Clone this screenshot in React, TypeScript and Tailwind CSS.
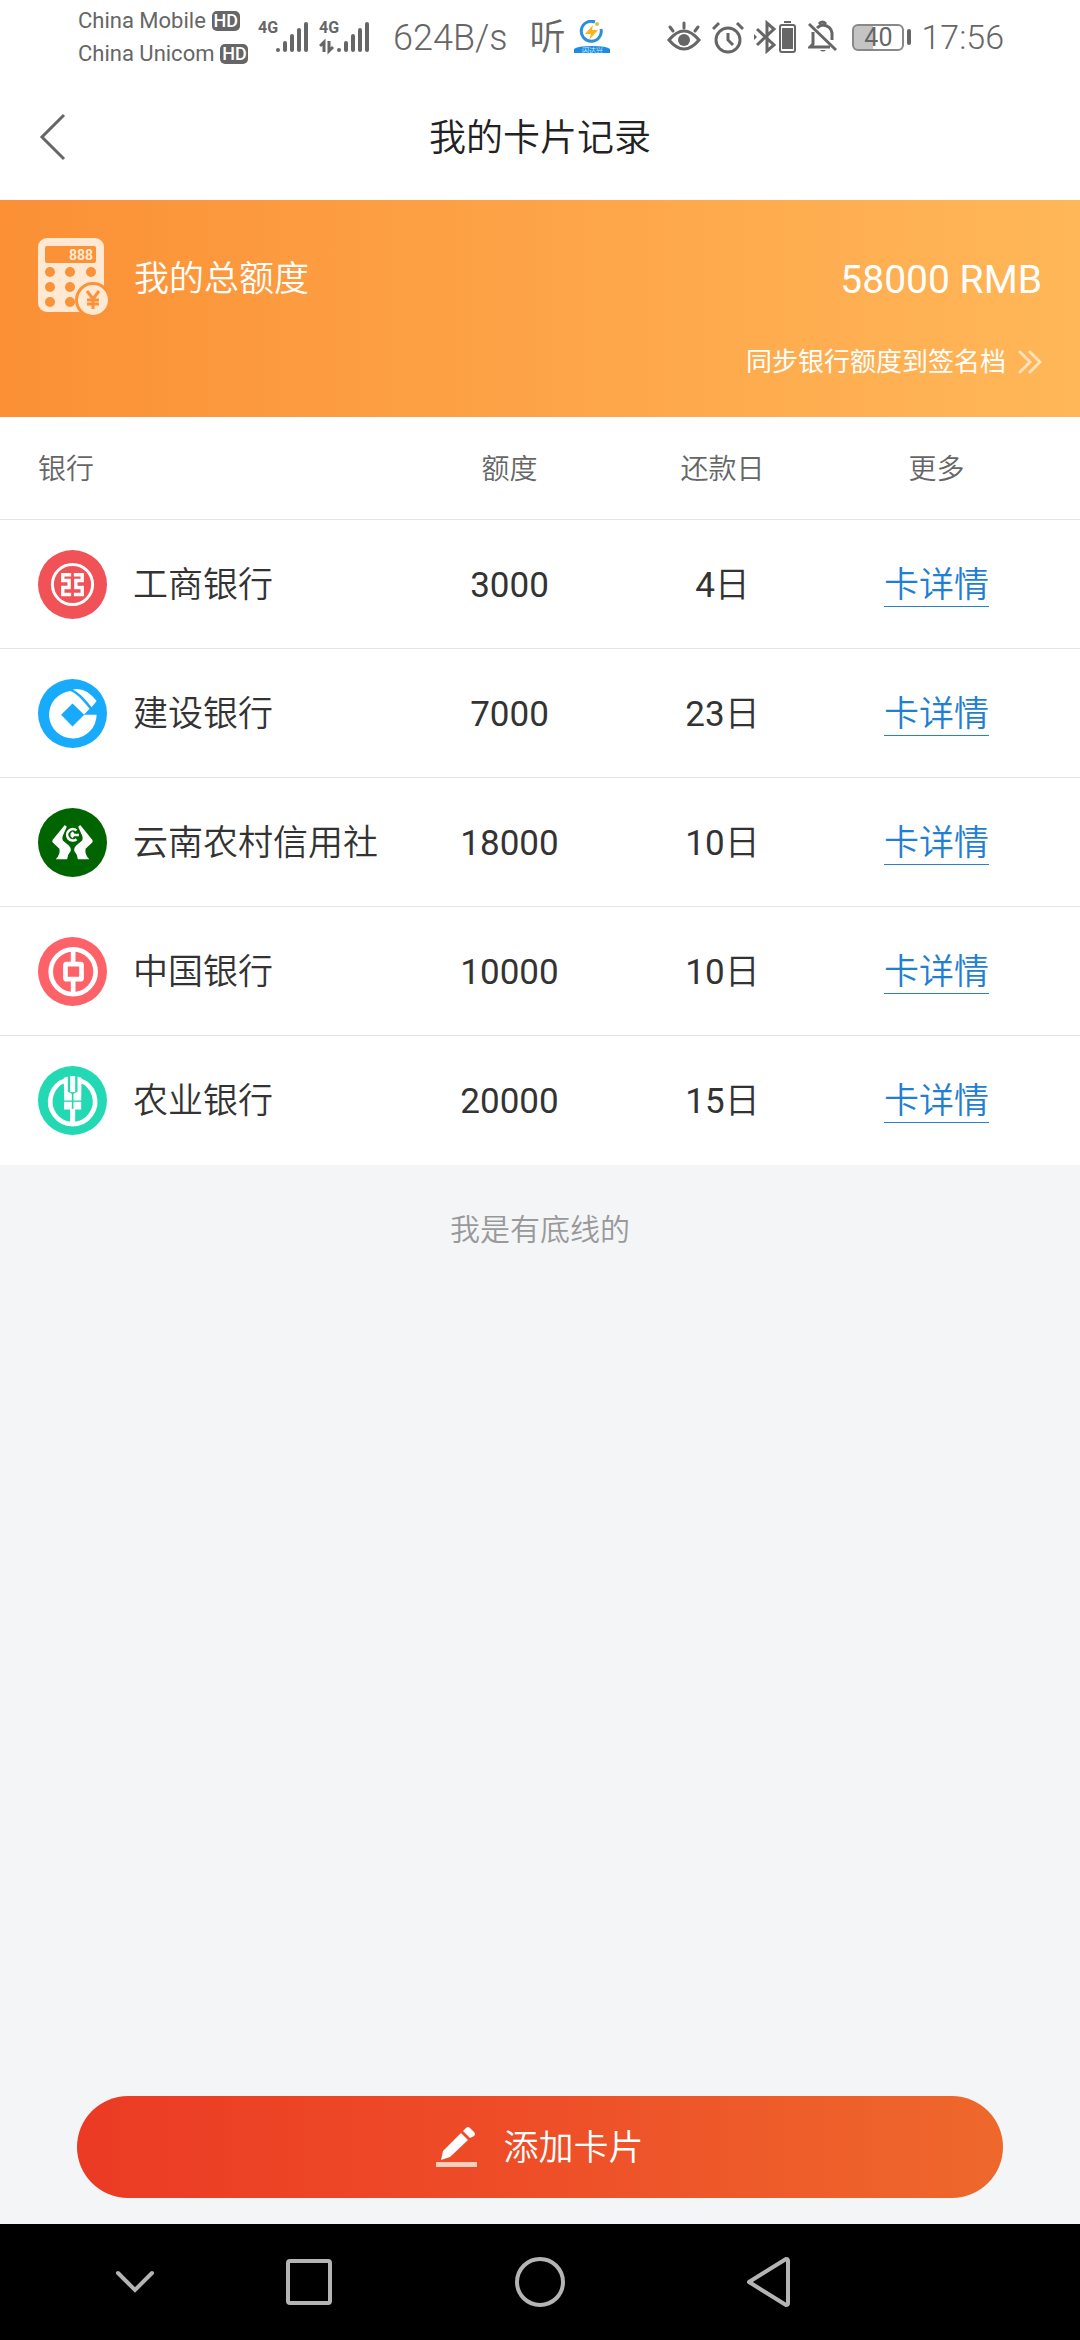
import type { ReactNode } from "react";

const IcbcLogo = () => (
	<svg viewBox="0 0 206 206" className="size-[69px] shrink-0" aria-hidden="true">
		<circle cx="103" cy="103" r="103" fill="#f05258" />
		<g fill="none" stroke="#fff">
			<circle cx="103" cy="103" r="60" strokeWidth="9" />
			<path d="M99 74H74V91H93V112H74V133H99" strokeWidth="10" />
			<path d="M107 74H132V91H113V112H132V133H107" strokeWidth="10" />
		</g>
	</svg>
);

const CcbLogo = () => (
	<svg viewBox="0 0 206 206" className="size-[69px] shrink-0" aria-hidden="true">
		<circle cx="103" cy="103" r="103" fill="#18abfb" />
		<path
			fill="#fff"
			fillRule="evenodd"
			d="M175 107A71 71 0 1 1 97 36Q118 43 154 89L137 107ZM103 73L69 107L103 142L138 107Z"
		/>
		<path fill="#fff" d="M104 31Q143 23 175 66L160 84Q130 44 104 31Z" />
	</svg>
);

const RuralCreditLogo = () => (
	<svg viewBox="0 0 206 206" className="size-[69px] shrink-0" aria-hidden="true">
		<circle cx="103" cy="103" r="103" fill="#006400" />
		<g fill="#fff">
			<path d="M80 51L44 95Q41 99 44 103L64 122Q67 140 53 153H87Q88 140 98 128Q99 118 92 112L74 97Q71 90 74 83L86 56Z" />
			<path d="M126 51L162 95Q165 99 162 103L142 122Q139 140 153 153H119Q118 140 108 128Q107 118 114 112L132 97Q135 90 132 83L120 56Z" />
			<path d="M98 75L103 70L108 75V77H122V84H108L103 90L97 84V77Z" />
		</g>
		<path d="M115 67A17 17 0 1 0 115 93" fill="none" stroke="#fff" strokeWidth="8" />
	</svg>
);

const BocLogo = () => (
	<svg viewBox="0 0 206 206" className="size-[69px] shrink-0" aria-hidden="true">
		<circle cx="103" cy="103" r="103" fill="#fc6268" />
		<g fill="none" stroke="#fff" strokeWidth="14">
			<circle cx="105" cy="104" r="67" />
			<rect x="82" y="81" width="48" height="45" rx="3" />
			<path d="M105 36V78M105 129V170" />
		</g>
	</svg>
);

const AbcLogo = () => (
	<svg viewBox="0 0 206 206" className="size-[69px] shrink-0" aria-hidden="true">
		<circle cx="103" cy="103" r="103" fill="#22d9b3" />
		<path
			d="M82 43A67 67 0 1 0 125 43"
			fill="none"
			stroke="#fff"
			strokeWidth="14"
		/>
		<g fill="#fff">
			<path d="M96 30H111V78H96Z" />
			<path d="M77 35L89 31V77L101 83V103H78Z" />
			<path d="M130 35L118 31V77L106 83V103H129Z" />
			<path d="M78 107H101V130H78Z" />
			<path d="M129 107H106V130H129Z" />
			<path d="M96 128H111V174H96Z" />
		</g>
	</svg>
);

const cards = [
	{ bank: "工商银行", limit: "3000", day: "4", Logo: IcbcLogo },
	{ bank: "建设银行", limit: "7000", day: "23", Logo: CcbLogo },
	{ bank: "云南农村信用社", limit: "18000", day: "10", Logo: RuralCreditLogo },
	{ bank: "中国银行", limit: "10000", day: "10", Logo: BocLogo },
	{ bank: "农业银行", limit: "20000", day: "15", Logo: AbcLogo },
];

const Carrier = ({ name }: { name: string }) => (
	<div className="flex h-[33px] items-center gap-[6px]">
		<span>{name}</span>
		<span className="flex h-5 w-7 items-center justify-center rounded-[5px] bg-[#666] text-[18px] font-medium text-white">
			HD
		</span>
	</div>
);

const SignalIcon = ({ data }: { data?: boolean }) => (
	<svg width="52" height="36" viewBox="0 0 52 36" className="text-[#666]" aria-hidden="true">
		<text x="0" y="14" fontSize="16" fontWeight="700" fill="currentColor">
			4G
		</text>
		<g fill="none" stroke="currentColor" strokeWidth="4" strokeLinecap="round">
			<path d="M20 31V31M27 31V24M34 31V17M41 31V11M48 31V5" />
		</g>
		{data && (
			<path
				d="M1 27L5 23V33M10 22V32L14 28"
				fill="none"
				stroke="currentColor"
				strokeWidth="3"
			/>
		)}
	</svg>
);

const StatusBar = () => (
	<div className="flex h-[74px] items-center justify-between bg-white pr-[76px] pl-[78px] text-[#666]">
		<div className="flex items-center">
			<div className="w-[180px] text-[22px]">
				<Carrier name="China Mobile" />
				<Carrier name="China Unicom" />
			</div>
			<div className="flex gap-[9px]">
				<SignalIcon />
				<SignalIcon data />
			</div>
			<span className="ml-[22px] pt-[2px] text-[36px] font-[350]">624B/s</span>
			<span className="ml-[22px] pt-[2px] text-[36px] font-[350]">听</span>
			<svg width="36" height="34" viewBox="0 0 36 34" className="ml-[8px]" aria-hidden="true">
				<path d="M21 2A10 10 0 1 0 27 9" fill="none" stroke="#2a8fd8" strokeWidth="3" />
				<circle cx="23" cy="4" r="2" fill="#d9c24a" />
				<path d="M19 5L11 14H17L15 20L24 10H18Z" fill="#fbb31c" />
				<path d="M0 32V29Q3 26 18 26Q33 26 36 29V33H0Z" fill="#1c8de0" />
				<text x="8" y="33" fontSize="7" fill="#d8eeff">
					闪达兴
				</text>
			</svg>
		</div>
		<div className="flex items-center">
			<svg width="34" height="34" viewBox="0 0 34 34" fill="none" stroke="currentColor" strokeWidth="3" strokeLinecap="round" aria-hidden="true">
				<path d="M2 20Q17 2 32 20Q17 38 2 20Z" />
				<circle cx="17" cy="20" r="6" fill="currentColor" stroke="none" />
				<path d="M17 8V3M6 11L3 7M28 11L31 7" />
			</svg>
			<svg width="32" height="34" viewBox="0 0 32 34" fill="none" stroke="currentColor" strokeWidth="3" className="ml-[11px]" aria-hidden="true">
				<circle cx="16" cy="20" r="12" />
				<path d="M16 13V20L21 25" />
				<path d="M1 9L7 3M25 3L31 9" />
			</svg>
			<svg width="43" height="34" viewBox="0 0 43 34" fill="none" stroke="currentColor" strokeWidth="3" className="ml-[10px]" aria-hidden="true">
				<path d="M3 9L20 25L13 31V3L20 9L3 25" />
				<path d="M0 14L3 17L0 20Z" fill="currentColor" stroke="none" />
				<rect x="26" y="5" width="15" height="27" rx="2" strokeWidth="2" />
				<path d="M28 8H39V29H28ZM30 1H37V3H30Z" fill="currentColor" stroke="none" />
			</svg>
			<svg width="30" height="34" viewBox="0 0 30 34" fill="none" stroke="currentColor" strokeWidth="3" className="ml-[11px]" aria-hidden="true">
				<path d="M1 4L28 30" />
				<path d="M5 12V24L2 27H22M24 20V13Q23 6 15 5Q12 5 9 8" />
				<path d="M11 4Q14 0 18 4" />
				<path d="M12 30Q15 33 18 30Z" fill="currentColor" stroke="none" />
			</svg>
			<div className="ml-[14px] flex items-center gap-[3px]">
				<div className="flex h-[27px] w-[52px] items-center justify-center rounded-md border-2 border-[#888] bg-linear-to-r from-[#c4c4c4] from-40% to-white to-40% text-[25px] leading-none">
					40
				</div>
				<div className="h-4 w-1 rounded-sm bg-[#666]" />
			</div>
			<span className="ml-[10px] text-[34px] font-[350]">17:56</span>
		</div>
	</div>
);

const Header = () => (
	<header className="grid h-[126px] grid-cols-[1fr_auto_1fr] items-center bg-white px-[38px]">
		<button type="button" aria-label="返回" className="justify-self-start">
			<svg width="30" height="48" viewBox="0 0 30 48" fill="none" stroke="#666" strokeWidth="3" aria-hidden="true">
				<path d="M26 2L4 24L26 46" />
			</svg>
		</button>
		<h1 className="pt-1 text-[37px] font-[350] text-[#222]">我的卡片记录</h1>
	</header>
);

const Summary = () => (
	<section className="flex h-[217px] flex-col bg-linear-to-r from-[#fb9035] to-[#ffb758] px-[38px] pt-[35px] text-white">
		<div className="flex h-[86px] items-center">
			<svg width="70" height="80" viewBox="0 0 70 80" aria-hidden="true">
				<rect x="0" y="0" width="66" height="74" rx="9" fill="#ffe9d3" />
				<rect x="7" y="8" width="51" height="17" rx="2" fill="#fb9237" />
				<text x="31" y="22" fontSize="14" fontWeight="700" fill="#ffe9d3">
					888
				</text>
				<g fill="#fb9237">
					<circle cx="12" cy="34" r="5" />
					<circle cx="32" cy="34" r="5" />
					<circle cx="53" cy="34" r="5" />
					<circle cx="12" cy="49" r="5" />
					<circle cx="32" cy="49" r="5" />
					<circle cx="12" cy="64" r="5" />
					<circle cx="32" cy="64" r="5" />
					<circle cx="55" cy="62" r="18" />
				</g>
				<circle cx="55" cy="62" r="15" fill="#ffe9d3" />
				<path d="M49 53L55 61L61 53M55 61V71M49 62H61M49 66H61" fill="none" stroke="#fb9237" strokeWidth="3" />
			</svg>
			<span className="ml-[26px] pt-1 text-[35px] font-[350]">我的总额度</span>
			<span className="ml-auto pt-1 text-[39px]">58000 RMB</span>
		</div>
		<a href="#sync" className="flex h-[82px] items-center justify-end gap-[12px] text-[26px]">
			同步银行额度到签名档
			<svg width="24" height="26" viewBox="0 0 24 26" fill="none" stroke="#ffe0b8" strokeWidth="3" aria-hidden="true">
				<path d="M1 2L12 13L1 24M11 2L22 13L11 24" />
			</svg>
		</a>
	</section>
);

const HeadCell = ({ className, children }: { className: string; children: ReactNode }) => (
	<th scope="col" className={`h-[103px] border-b border-[#e4e4e4] pt-1 font-[350] ${className}`}>
		{children}
	</th>
);

const CardTable = () => (
	<table className="w-full table-fixed border-separate border-spacing-0 bg-white text-center text-[35px] text-[#333]">
		<thead className="text-[28px] text-[#666]">
			<tr>
				<HeadCell className="pl-[38px] text-left">银行</HeadCell>
				<HeadCell className="w-[213px]">额度</HeadCell>
				<HeadCell className="w-[213px]">还款日</HeadCell>
				<HeadCell className="w-[251px] pr-[36px]">更多</HeadCell>
			</tr>
		</thead>
		<tbody className="[&>tr:last-child>td]:border-white">
			{cards.map(({ bank, limit, day, Logo }) => (
				<tr key={bank}>
					<td className="h-[129px] border-b border-[#e4e4e4] pl-[38px]">
						<div className="flex items-center gap-[26px] font-[350] whitespace-nowrap">
							<Logo />
							<span className="pt-1">{bank}</span>
						</div>
					</td>
					<td className="border-b border-[#e4e4e4] pt-1">{limit}</td>
					<td className="border-b border-[#e4e4e4] pt-1">
						{day}
						<span className="font-[350]">日</span>
					</td>
					<td className="border-b border-[#e4e4e4] pt-1 pr-[36px]">
						<a href="#detail" className="inline-block border-b border-[#2a82c4] leading-[40px] font-[350] text-[#1f80d2]">
							卡详情
						</a>
					</td>
				</tr>
			))}
		</tbody>
	</table>
);

const NavBar = () => (
	<nav className="grid h-[116px] grid-cols-[174fr_174fr_288fr_170fr] items-center justify-items-center bg-black pr-[226px] pl-12 text-[#b4b4b4]">
		<button type="button" aria-label="收起">
			<svg width="40" height="24" viewBox="0 0 40 24" fill="none" stroke="currentColor" strokeWidth="4" strokeLinecap="round" aria-hidden="true">
				<path d="M3 3L20 20L37 3" />
			</svg>
		</button>
		<button type="button" aria-label="最近任务">
			<svg width="46" height="46" viewBox="0 0 46 46" fill="none" stroke="currentColor" strokeWidth="4" aria-hidden="true">
				<rect x="2" y="2" width="42" height="42" rx="2" />
			</svg>
		</button>
		<button type="button" aria-label="主屏幕">
			<svg width="50" height="50" viewBox="0 0 50 50" fill="none" stroke="currentColor" strokeWidth="4" aria-hidden="true">
				<circle cx="25" cy="25" r="23" />
			</svg>
		</button>
		<button type="button" aria-label="返回上一页">
			<svg width="44" height="50" viewBox="0 0 44 50" fill="none" stroke="currentColor" strokeWidth="4" strokeLinejoin="round" aria-hidden="true">
				<path d="M2 25L39 2Q41 2 41 4V46Q41 48 39 48Z" />
			</svg>
		</button>
	</nav>
);

const App = () => {
	return (
		<div className="flex min-h-screen flex-col bg-[#f4f5f7] font-[Roboto,'Noto_Sans_CJK_SC',sans-serif]">
			<StatusBar />
			<Header />
			<Summary />
			<CardTable />
			<p className="pt-[42px] text-center text-[30px] font-[350] text-[#999]">我是有底线的</p>
			<div className="mt-auto px-[77px] pb-[26px]">
				<button
					type="button"
					className="flex h-[102px] w-full items-center justify-center gap-[26px] rounded-full bg-linear-to-r from-[#eb3a24] via-[#ee4e28] to-[#ee682c] text-[35px] font-[350] text-white"
				>
					<svg width="41" height="40" viewBox="0 0 41 40" aria-hidden="true">
						<path d="M7 24L25 6L32 13L14 30L5 33Z" fill="#fff" />
						<path d="M27 4L30 1Q32 -1 34 1L38 5Q40 7 38 9L34 11Z" fill="#fff" />
						<path d="M0 35H41V40H0Z" fill="#ffcdb8" />
					</svg>
					<span className="pt-1">添加卡片</span>
				</button>
			</div>
			<NavBar />
		</div>
	);
};

export default App;
